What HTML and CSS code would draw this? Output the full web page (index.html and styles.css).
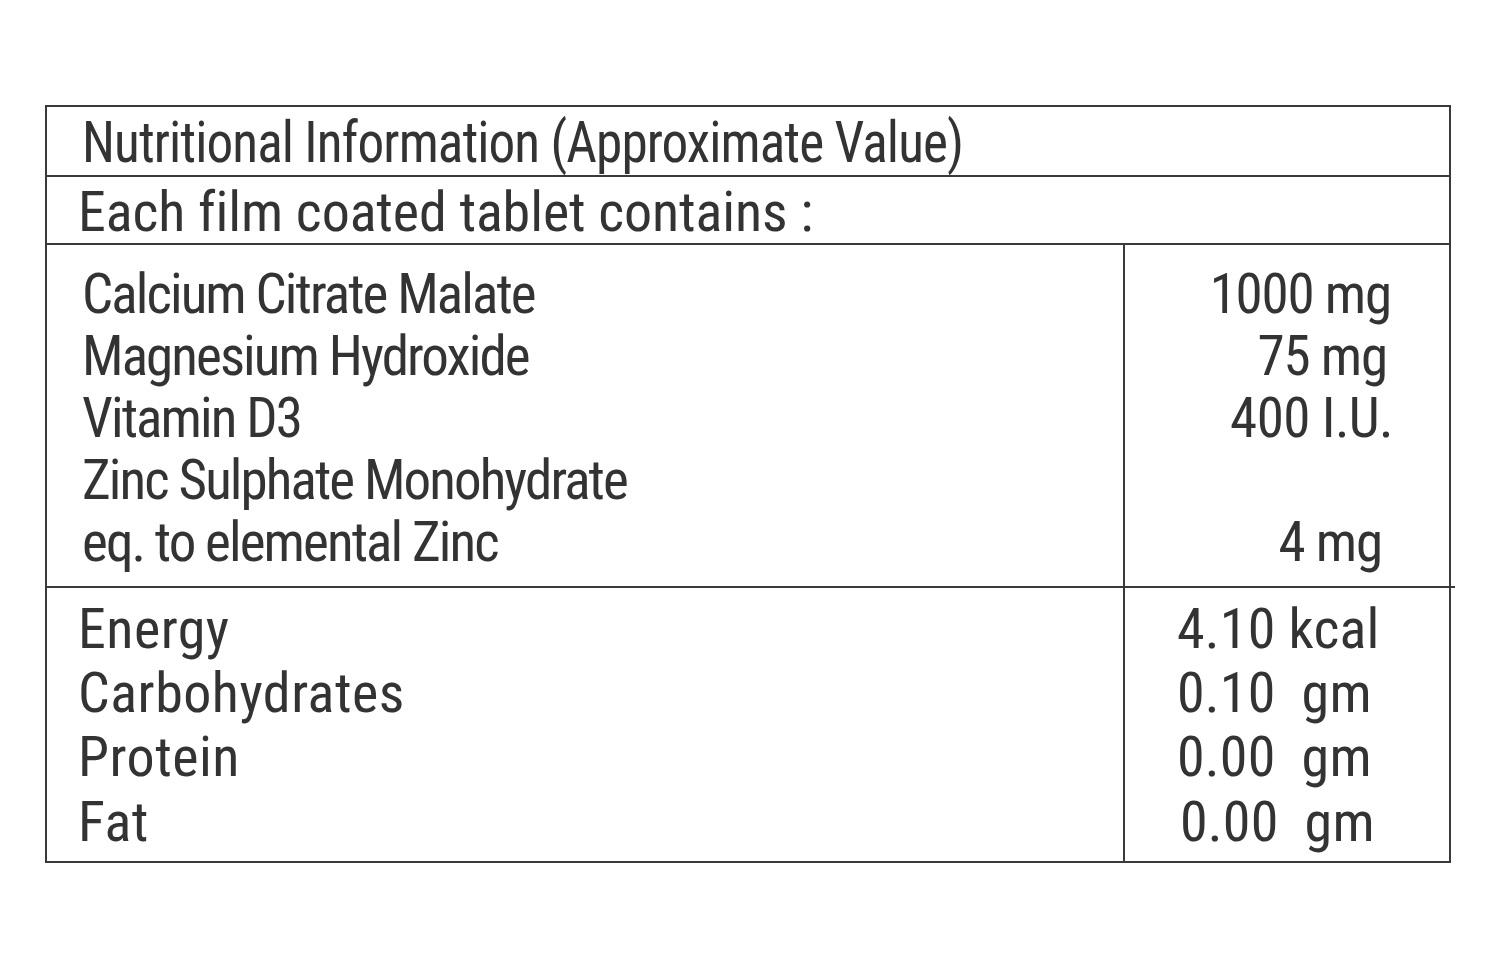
FILE: index.html
```html
<!DOCTYPE html>
<html lang="en">
<head>
<meta charset="utf-8">
<title>Nutritional Information</title>
<link rel="stylesheet" href="styles.css">
</head>
<body>
<div class="panel">
  <div class="row title"><span class="title-text">Nutritional Information (Approximate Value)</span></div>
  <div class="row subtitle">Each film coated tablet contains :</div>
  <div class="row split ingredients">
    <div class="col-left">
      <div>Calcium Citrate Malate</div>
      <div>Magnesium Hydroxide</div>
      <div>Vitamin D3</div>
      <div>Zinc Sulphate Monohydrate</div>
      <div>eq. to elemental Zinc</div>
    </div>
    <div class="col-right">
      <div>1000 mg</div>
      <div class="n75">75 mg</div>
      <div class="n400">400 I.U.</div>
      <div class="blank">&nbsp;</div>
      <div class="n4">4 mg</div>
    </div>
  </div>
  <div class="row split energy">
    <div class="col-left">
      <div>Energy</div>
      <div>Carbohydrates</div>
      <div>Protein</div>
      <div class="fat-label">Fat</div>
    </div>
    <div class="col-right">
      <div class="val">4.10 kcal</div>
      <div class="val">0.10  gm</div>
      <div class="val">0.00  gm</div>
      <div class="val fat">0.00  gm</div>
    </div>
  </div>
</div>
</body>
</html>
```

FILE: styles.css
```css
html, body {
  margin: 0;
  padding: 0;
  background: #ffffff;
}

body {
  font-family: "Roboto Condensed", "Roboto", sans-serif;
  font-stretch: condensed;
  color: #333333;
}

.panel {
  box-sizing: border-box;
  width: 1406px;
  margin: 105px 0 0 45px;
  border: 2px solid #3a3a3a;
}

.row {
  border-bottom: 2px solid #3a3a3a;
  white-space: nowrap;
}

.row:last-child {
  border-bottom: none;
}

.title {
  height: 66px;
  padding: 2px 0 0 35px;
  line-height: 66px;
  font-size: 58px;
  letter-spacing: -1px;
}

.title-text {
  display: inline-block;
  transform: scaleX(0.918);
  transform-origin: left center;
}

.subtitle {
  height: 62px;
  padding: 4px 0 0 31px;
  line-height: 62px;
  font-size: 56px;
  letter-spacing: -0.1px;
}

.split {
  display: grid;
  grid-template-columns: 1076px 1fr;
}

.split .col-right {
  border-left: 2px solid #3a3a3a;
}

.ingredients {
  position: relative;
  font-size: 55px;
  line-height: 62px;
  letter-spacing: -1.9px;
}

.ingredients::after {
  content: "";
  position: absolute;
  right: -6px;
  bottom: -2px;
  width: 8px;
  height: 2px;
  background: #3a3a3a;
}

.ingredients .col-left {
  padding: 18px 0 13px 35px;
}

.ingredients .col-right {
  padding: 18px 58px 13px 0;
  text-align: right;
  letter-spacing: -1.2px;
}

.ingredients .n75 { padding-right: 4px; }
.ingredients .n4 { padding-right: 9px; }
.ingredients .n400 { margin-right: -2px; letter-spacing: -0.6px; }

.energy {
  font-size: 56px;
  line-height: 64px;
  letter-spacing: 0.5px;
}

.energy .col-left {
  padding: 9px 0 8px 31px;
}

.energy .col-right {
  padding: 9px 0 8px 52px;
  letter-spacing: 0.2px;
}

.energy .val {
  white-space: pre;
}

.energy .fat,
.energy .fat-label {
  position: relative;
  top: 1px;
}

.energy .fat {
  padding-left: 3px;
}
```
